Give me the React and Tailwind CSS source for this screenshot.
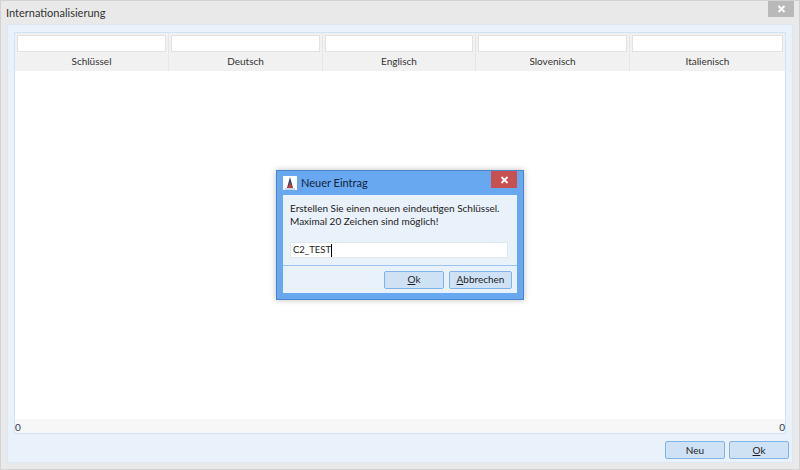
import React from 'react'

const columns = ['Schlüssel', 'Deutsch', 'Englisch', 'Slovenisch', 'Italienisch']

function Btn({ children, className = '' }) {
  return (
    <button className={`h-[18px] flex items-center justify-center border border-[#7eb4ea] bg-[#cfe1f5] rounded-[2px] text-[10px] text-[#1e1e1e] ${className}`}>
      {children}
    </button>
  )
}

function CloseIcon() {
  return (
    <svg width="9" height="8" viewBox="0 0 9 8">
      <path d="M1.5 1 L7.5 7 M7.5 1 L1.5 7" stroke="#fff" strokeWidth="1.8" />
    </svg>
  )
}

export default function App() {
  return (
    <div className="relative w-[800px] h-[470px] overflow-hidden bg-[#e9e9e9] border border-[#d2d2d2] flex flex-col font-['Lato',sans-serif] text-[10px] text-[#222]">
      {/* title bar */}
      <div className="h-[23px] shrink-0 flex items-start justify-between pl-[5px] pr-[5px]">
        <span className="text-[11px] leading-[24px] text-[#333]">Internationalisierung</span>
        <div className="w-[26px] h-[16px] bg-[#b9b9b9] flex items-center justify-center">
          <CloseIcon />
        </div>
      </div>

      {/* content */}
      <div className="mx-[6px] mb-[6px] flex-1 flex flex-col min-h-0 bg-[#e9f1fa] border border-[#dbe7f4] pt-[7px] px-[6px]">
        <div className="flex-1 flex flex-col min-h-0 bg-white border border-[#cfe2f6]">
          <div className="shrink-0 h-[38px] grid grid-cols-[154px_154px_153px_154px_1fr] bg-[#f1f1f1]">
            {columns.map((c) => (
              <div key={c} className="flex flex-col border-r border-[#e6e6e6] last:border-r-0 px-[2px]">
                <div className="mt-[2px] h-[17px] bg-white border border-[#e2e2e2]"></div>
                <div className="flex-1 flex items-center justify-center text-[#333] text-[10px]">{c}</div>
              </div>
            ))}
          </div>
          <div className="flex-1"></div>
          <div className="shrink-0 h-[14px] bg-[#f7f7f7] flex items-start justify-between text-[#2a3a55] text-[10px] leading-[16px]">
            <span>0</span>
            <span>0</span>
          </div>
        </div>
        <div className="shrink-0 h-[28px] flex items-start justify-end gap-[4px] -mr-[3px] pt-[7px]">
          <Btn className="w-[60px]">Neu</Btn>
          <Btn className="w-[60px]"><span><u>O</u>k</span></Btn>
        </div>
      </div>

      {/* dialog */}
      <div className="absolute left-[275px] top-[169px] w-[248px] h-[130px] bg-[#68a8f0] border border-[#4a86cc] flex flex-col shadow-[0_0_6px_rgba(0,0,0,0.25)]">
        <div className="h-[24px] shrink-0 flex items-start justify-between pl-[6px] pr-[6px]">
          <div className="flex items-center h-[24px] gap-[4px]">
            <svg width="14" height="14" viewBox="0 0 14 14">
              <rect width="14" height="14" fill="#fff" />
              <path d="M7 1 L10 12 L4 12 Z" fill="#26406e" />
              <path d="M7 6 L10 12 L4.5 12 Z" fill="#b8443a" />
              <path d="M2 13 H12" stroke="#8fb0dc" strokeWidth="1" />
            </svg>
            <span className="text-[11px] text-[#10243d]">Neuer Eintrag</span>
          </div>
          <div className="w-[26px] h-[17px] bg-[#c75050] flex items-center justify-center">
            <CloseIcon />
          </div>
        </div>
        <div className="mx-[6px] mb-[6px] flex-1 bg-[#e9f1fa] flex flex-col">
          <div className="px-[7px] pt-[7px] text-[10px] leading-[13px] text-[#222] whitespace-nowrap">
            <div>Erstellen Sie einen neuen eindeutigen Schlüssel.</div>
            <div>Maximal 20 Zeichen sind möglich!</div>
          </div>
          <div className="ml-[7px] mr-[9px] mt-[14px] h-[16px] bg-white border border-[#e2e8f0] flex items-center px-[2px] text-[9.5px] text-[#222]">
            C2_TEST<span className="w-px h-[13px] bg-black"></span>
          </div>
          <div className="mt-[7px] border-t border-[#9cc4ee]"></div>
          <div className="flex-1 flex items-center justify-end gap-[5px] pr-[5px]">
            <Btn className="w-[60px]"><span><u>O</u>k</span></Btn>
            <Btn className="w-[63px]"><span><u>A</u>bbrechen</span></Btn>
          </div>
        </div>
      </div>
    </div>
  )
}
